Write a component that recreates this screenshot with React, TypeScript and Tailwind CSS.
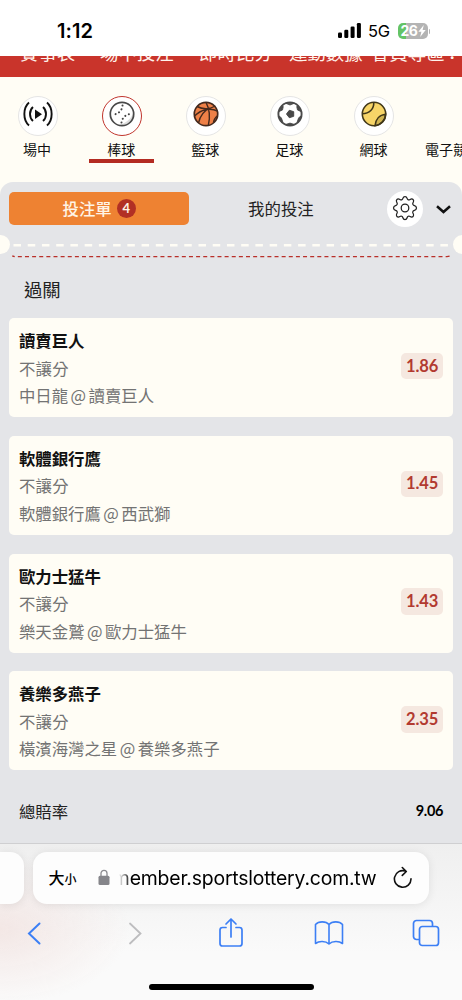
import type { ReactNode } from "react";

const bets = [
  { pick: "讀賣巨人", match: "中日龍 @ 讀賣巨人", odds: "1.86" },
  { pick: "軟體銀行鷹", match: "軟體銀行鷹 @ 西武獅", odds: "1.45" },
  { pick: "歐力士猛牛", match: "樂天金鷲 @ 歐力士猛牛", odds: "1.43" },
  { pick: "養樂多燕子", match: "橫濱海灣之星 @ 養樂多燕子", odds: "2.35" },
];

const LiveIcon = () => (
  <svg width="30" height="26" viewBox="0 0 30 26" fill="none" stroke="#111" strokeWidth="1.9">
    <path d="M6 1.5C-.2 7-.2 19 6 24.5M24 1.5c6.2 5.5 6.2 17.5 0 23M10 6c-4 3.500-4 10.500 0 14M20 6c4 3.500 4 10.500 0 14" />
    <path d="M12 8.500v9.500l7-4.700z" fill="#111" stroke="none" />
  </svg>
);

const BaseballIcon = () => (
  <svg width="26" height="26" viewBox="0 0 26 26" fill="none">
    <circle cx="13" cy="13" r="11.700" fill="#fff" />
    <path d="M24 12A11 11 0 0 1 10 24C17 22 22 18 24 12Z" fill="#ddd" />
    <circle cx="13" cy="13" r="11.700" stroke="#484848" strokeWidth="1.7" />
    <path d="M13.500 4.500c-.3 4.500-3.500 8.300-8.800 9M12.500 21.500c.5-4.500 4-8 9-8.500" stroke="#444" strokeWidth="2" strokeLinecap="round" strokeDasharray=".1 3.800" />
  </svg>
);

const BasketballIcon = () => (
  <svg width="26" height="26" viewBox="0 0 26 26" fill="none" stroke="#44291d" strokeWidth="1.4">
    <circle cx="13" cy="13" r="11.700" fill="#ee8047" strokeWidth="1.7" />
    <path d="M13 1.300c3.500 6.500 4.300 15 2.300 23.200M4 5.500c6 3 13 2.500 18.500-.5M1.500 15C8 8.500 17 6.500 24.500 10M5.500 22C7 15.500 11.500 9.500 17 7.200M20.500 21.500c.3-2.500 1.500-5 4-6.800" />
  </svg>
);

const SoccerIcon = () => (
  <svg width="26" height="26" viewBox="0 0 26 26" fill="none">
    <circle cx="13" cy="13" r="11.600" fill="#fff" stroke="#4b4b4b" strokeWidth="1.9" />
    <path d="M8.500 2.200h9L13 4zM2.200 10.500 5 4.700l1.300.8-.8 3.500zM23.800 10.500 21 4.700l-1.300.8.8 3.500zM2 15l2.300 1.700 1.500 4-1 .8zM24 15l-2.300 1.700-1.500 4 1 .8zM8.500 23.500l4.500-1.400 4.500 1.400-4.500 1z" fill="#484848" stroke="#484848" strokeWidth=".8" />
    <path d="m12.300 9.300 4.400 1.400v4.600l-4.400 1.400L9.500 13z" fill="#484848" stroke="#484848" strokeLinejoin="round" />
  </svg>
);

const TennisIcon = () => (
  <svg width="26" height="26" viewBox="0 0 26 26" fill="none" stroke="#403719" strokeWidth="1.6">
    <circle cx="13" cy="13" r="11.700" fill="#f7d568" stroke="none" />
    <path d="M24.600 13.200c-6 .5-10 5-10.600 11.500C20 24 24.500 19 24.600 13.200Z" fill="#d1b552" />
    <path d="M12.800 1.200C13 8 8.500 12.800 1.200 12.800" />
    <circle cx="13" cy="13" r="11.700" />
  </svg>
);

const GearIcon = () => (
  <svg width="26" height="26" viewBox="0 0 26 26" fill="none" stroke="#202020" strokeWidth="1.250" strokeLinejoin="round">
    <path d="M10.700 3.900C11.200 2.400 11.200 1.500 13 1.500s1.800.9 2.300 2.400c.3.900 1.500 1.300 2.300.8 1.300-.7 2.200-1.500 3.500-.2s.5 2.200-.2 3.500c-.4.900 0 2 .9 2.300 1.600.5 2.700.8 2.700 2.700s-1.100 2.200-2.700 2.700c-.9.300-1.300 1.400-.9 2.300.7 1.300 1.500 2.200.2 3.500s-2.200.5-3.500-.2c-.8-.5-2 0-2.300.9-.5 1.500-.5 2.400-2.300 2.400s-1.800-.9-2.300-2.400c-.3-.9-1.500-1.400-2.300-.9-1.300.7-2.200 1.500-3.500.2s-.5-2.200.2-3.500c.4-.9 0-2-.9-2.300C2.600 15.200 1.500 14.900 1.500 13s1.100-2.200 2.700-2.700c.9-.3 1.300-1.400.9-2.300-.7-1.300-1.500-2.200-.2-3.500s2.200-.5 3.500.2c.8.500 2 .1 2.300-.8Z" />
    <circle cx="13" cy="13" r="3.800" />
  </svg>
);

const sports: { label: string; icon: ReactNode; active?: boolean }[] = [
  { label: "場中", icon: <LiveIcon /> },
  { label: "棒球", icon: <BaseballIcon />, active: true },
  { label: "籃球", icon: <BasketballIcon /> },
  { label: "足球", icon: <SoccerIcon /> },
  { label: "網球", icon: <TennisIcon /> },
];

const StatusBar = () => (
  <div className="flex h-[55.500px] shrink-0 items-start bg-white pt-[19px] pl-[57px] font-[Inter,sans-serif]">
    <span className="text-[20px] leading-6 font-semibold tracking-[0.100px] text-black">1:12</span>
    <svg className="mt-[4px] ml-auto" width="24" height="16" viewBox="0 0 24 16">
      <rect x="0" y="9.500" width="4" height="5.500" rx="1.200" />
      <rect x="6.300" y="6.800" width="4" height="8.200" rx="1.200" />
      <rect x="12.600" y="3.500" width="4" height="11.500" rx="1.200" />
      <rect x="18.900" y="0" width="4" height="15" rx="1.200" />
    </svg>
    <span className="ml-[6px] w-[23px] text-[16.500px] leading-[25px] tracking-[-0.300px] text-black">5G</span>
    <div className="mt-[3.500px] ml-[7px] flex h-[16.500px] w-[29.500px] items-center rounded-[5px] bg-[linear-gradient(90deg,#64c466_26%,#b4b4b4_26%)] pl-[2.500px] text-white">
      <span className="text-[14px] leading-4 font-bold tracking-[-0.600px]">26</span>
      <svg className="ml-[.5px]" width="8" height="12" viewBox="0 0 8 12" fill="currentColor">
        <path d="M5.800 0 .4 6.700h3L2.200 12l5.500-7H4.600z" />
      </svg>
    </div>
    <span className="mt-[9.500px] mr-[32px] ml-[1px] h-[5px] w-[1.500px] rounded-r bg-[#b4b4b4]" />
  </div>
);

const TopNav = () => (
  <div className="h-[21.500px] shrink-0 overflow-hidden bg-[#c9342b]">
    <div className="-mt-[16.500px] flex pl-[20px] text-[18.400px] leading-[27px] whitespace-nowrap text-[#fff3ec]">
      <span className="w-[80px] shrink-0">賽事表</span>
      <span className="w-[99px] shrink-0">場中投注</span>
      <span className="w-[90px] shrink-0">即時比分</span>
      <span className="w-[82px] shrink-0">運動數據</span>
      <span className="w-[80px] shrink-0">會員專區</span>
      <span className="-ml-[8px]">：</span>
    </div>
  </div>
);

const SportTabs = () => (
  <div className="flex h-[105px] shrink-0 overflow-hidden pt-[19px]">
    <div className="-ml-[4.500px] flex">
      {sports.map((s) => (
        <div key={s.label} className="flex w-[84.100px] shrink-0 flex-col items-center">
          <div
            className={
              "flex size-10 items-start justify-center rounded-full border bg-white " +
              (s.active ? "border-[#c1352d]" : "border-[#e5e5e5]")
            }
          >
            <div className="mt-[4px]">{s.icon}</div>
          </div>
          <span className="mt-[3px] mr-[1px] text-[14px] leading-5 text-[#111]">{s.label}</span>
          {s.active && <div className="h-[3.500px] w-[65px] bg-[#b42b22]" />}
        </div>
      ))}
      <span className="mt-[43px] ml-[9px] text-[14px] leading-5 whitespace-nowrap text-[#111]">電子競技</span>
    </div>
  </div>
);

const BetCard = ({ pick, match, odds }: { pick: string; match: string; odds: string }) => (
  <div className="flex h-[99px] items-center justify-between rounded-[5px] bg-[#fffdf5] pr-[9.500px] pl-[9.500px]">
    <div className="flex flex-col pt-[1px] text-[16.400px] text-[#737373]">
      <span className="leading-[27.500px] font-bold text-[#111]">{pick}</span>
      <span className="leading-[26.500px] tracking-[0.300px]">不讓分</span>
      <span className="leading-[28px] [word-spacing:-1.200px]">{match}</span>
    </div>
    <span className="mb-[3px] flex h-[26.500px] w-[42px] items-center justify-center rounded-[5px] bg-[#f5e8e0] font-[Lato,sans-serif] text-[16.500px] font-bold tracking-[-0.100px] text-[#b23a30]">
      {odds}
    </span>
  </div>
);

const BetSlip = () => (
  <div className="relative h-[660.500px] shrink-0 rounded-t-[13px] bg-[#e4e5e8] px-[9.400px] pt-[8px]">
    <div className="flex h-[37px] items-center">
      <div className="flex h-[33px] w-[179.500px] items-center justify-center gap-[5px] rounded-[5px] bg-[#ee8232] text-[16.400px] font-medium text-[#fff4e6]">
        投注單
        <span className="flex size-[19px] items-center justify-center rounded-full bg-[#b23024] font-[Lato,sans-serif] text-[13px] font-bold">
          4
        </span>
      </div>
      <span className="w-[184px] text-center text-[16.400px] text-[#222]">我的投注</span>
      <div className="ml-[14px] flex size-[36px] shrink-0 items-center justify-center rounded-full bg-white pb-[2px]">
        <GearIcon />
      </div>
      <svg className="mt-[2px] ml-[13.500px]" width="15" height="9" viewBox="0 0 15 9" fill="none" stroke="#111" strokeWidth="2.500">
        <path d="m1 1.300 6.500 5.700L14 1.300" />
      </svg>
    </div>

    {/* ticket notches on both edges */}
    <div className="absolute top-[53px] left-[-9.500px] size-[19px] rounded-full bg-[#fffdf5]" />
    <div className="absolute top-[53px] right-[-9.500px] size-[19px] rounded-full bg-[#fffdf5]" />
    <svg className="mt-[15px] block" width="443" height="18" fill="none">
      <path d="M4.500 3.200H440" stroke="#fffdf5" strokeWidth="2.600" strokeDasharray="7.500 6.730" />
      <path d="M3.300 14 6 14.700H438l3-.7" stroke="#b9302a" strokeWidth="1.300" strokeDasharray="4 3.130" strokeDashoffset="1.500" />
    </svg>

    <div className="mt-[15px] pl-[14.500px] text-[18.400px] leading-[28px] text-[#222]">過關</div>
    <div className="mt-[15px] flex flex-col gap-[18.800px]">
      {bets.map((bet) => (
        <BetCard key={bet.pick} {...bet} />
      ))}
    </div>
    <div className="mt-[27px] flex items-center justify-between px-[9.500px] text-[16.400px] leading-[28px] text-[#222]">
      總賠率
      <span className="font-[Lato,sans-serif] text-[14.500px] font-bold tracking-[-0.300px] text-black">9.06</span>
    </div>
  </div>
);

const SafariBar = () => (
  <div className="flex grow flex-col overflow-hidden border-t border-[#cfcfd1] bg-[radial-gradient(ellipse_130px_75px_at_0px_85px,#f3e7e5,transparent),linear-gradient(#efefef,#fafafa_70%)]">
    <div className="mt-[8.500px] flex h-[52px] shrink-0 gap-[9px]">
      <div className="w-[24px] rounded-r-[14px] bg-[#fdfdfd] shadow-[0_1px_10px_rgba(0,0,0,0.09)]" />
      <div className="flex w-[396px] items-center rounded-[14px] bg-[#fdfdfd] pl-[15.500px] text-black shadow-[0_1px_10px_rgba(0,0,0,0.09)]">
        <span className="-mt-[3px] flex w-[49px] items-baseline font-medium">
          <span className="text-[16px]">大</span>
          <span className="text-[12px]">小</span>
        </span>
        <svg className="-mt-[1px]" width="12" height="17" viewBox="0 0 12 17">
          <path d="M3 7V4.300a3 3 0 0 1 6 0V7" fill="none" stroke="#8b8b90" strokeWidth="1.300" />
          <rect x=".5" y="6.800" width="11" height="9.200" rx="1.500" fill="#85858a" />
        </svg>
        <div className="ml-[9px] flex h-[28px] w-[258px] justify-end overflow-hidden font-[Inter,sans-serif] text-[19.400px] leading-[28px] tracking-[-0.180px] whitespace-nowrap [mask-image:linear-gradient(90deg,transparent,#000_12px)]">
          member.sportslottery.com.tw
        </div>
        <svg className="-mt-[2px] ml-[16px]" width="20" height="23" viewBox="0 0 20 23" fill="none" stroke="#111" strokeWidth="1.600" strokeLinecap="round" strokeLinejoin="round">
          <path d="M18 12.800A8.300 8.300 0 1 1 12.500 5.100M9.300 1.500l4 4-4 3.900" />
        </svg>
      </div>
    </div>
    <div className="mt-[12px] flex h-[34px] shrink-0 items-center pl-[27px] text-[#3c7ff5]">
      <svg width="14" height="23" viewBox="0 0 14 23" fill="none" stroke="currentColor" strokeWidth="2" strokeLinecap="round">
        <path d="M12.500 1.500 2 11.500l10.500 10" />
      </svg>
      <svg className="ml-[86.500px]" width="14" height="23" viewBox="0 0 14 23" fill="none" stroke="#bdbdbf" strokeWidth="1.800" strokeLinecap="round">
        <path d="m2 1.500 10.500 10L2 21.500" />
      </svg>
      <svg className="-mt-[2px] ml-[76.500px]" width="26" height="31" viewBox="0 0 26 31" fill="none" stroke="currentColor" strokeWidth="1.700" strokeLinecap="round" strokeLinejoin="round">
        <path d="M8 10.500H4.500a2.500 2.500 0 0 0-2.500 2.500v13.500A2.500 2.500 0 0 0 4.500 29h17a2.500 2.500 0 0 0 2.500-2.500V13a2.500 2.500 0 0 0-2.500-2.500H18M13 20V2M8 7l5-5 5 5" />
      </svg>
      <svg className="ml-[69.500px]" width="30" height="26" viewBox="0 0 30 26" fill="none" stroke="currentColor" strokeWidth="1.600" strokeLinejoin="round">
        <path d="M15 24V4.500C12 1 4.500 1 1.500 4.500v19c3.500-2.700 10-2.700 13.500.5 3.500-3.200 10-3.200 13.500-.5v-19C25.500 1 18 1 15 4.500" />
      </svg>
      <svg className="ml-[68.500px]" width="28" height="28" viewBox="0 0 28 28" fill="none" stroke="currentColor" strokeWidth="1.700">
        <path d="M7.500 20.500H4.500a3 3 0 0 1-3-3v-13a3 3 0 0 1 3-3h13a3 3 0 0 1 3 3v3" />
        <rect x="7.500" y="7.500" width="19" height="19" rx="2.800" />
      </svg>
    </div>
    <div className="mx-auto mt-[34px] h-[6px] w-[165px] rounded-full bg-black" />
  </div>
);

export default function App() {
  return (
    <div className="flex h-[1000px] w-[462px] flex-col overflow-hidden bg-[#fffdf5] font-['Noto_Sans_CJK_TC',sans-serif]">
      <StatusBar />
      <TopNav />
      <SportTabs />
      <BetSlip />
      <SafariBar />
    </div>
  );
}
